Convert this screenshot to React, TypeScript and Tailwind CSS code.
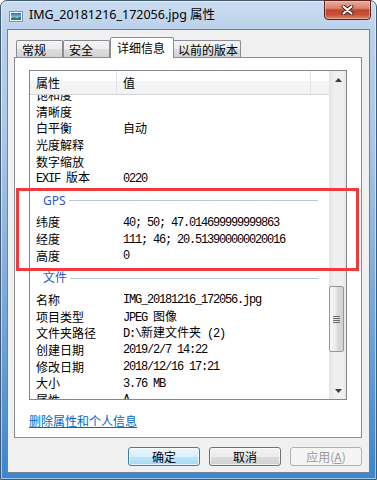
import React from 'react';

const cjk = "font-['Noto_Sans_CJK_SC',sans-serif]";
const mono = "font-['Liberation_Mono','Noto_Sans_CJK_SC',monospace] tracking-[-1.2px]";

// half-width text in the SimSun-like cell grid (6px per char)
const M = ({ children }: { children: React.ReactNode }) => <span className={mono}>{children}</span>;
const C = ({ children }: { children: React.ReactNode }) => <span className={`${cjk} tracking-normal`}>{children}</span>;

type RowProps = { label: React.ReactNode; value?: React.ReactNode };

const Row: React.FC<RowProps> = ({ label, value }) => (
  <div className="flex h-[16.7px] items-center whitespace-nowrap text-[12px] leading-none text-black">
    <div className={`w-[87px] shrink-0 pl-[6px] ${cjk}`}>{label}</div>
    <div className="pl-[6px]">{value}</div>
  </div>
);

const Group: React.FC<{ title: string }> = ({ title }) => (
  <div className="flex h-[27.3px] items-center pl-[13px] pr-[11px] pt-[1px]">
    <span className="font-['Noto_Sans','Noto_Sans_CJK_SC',sans-serif] text-[12px] leading-none text-[#2b5bcb]">{title}</span>
    <div className="ml-[3px] h-px flex-1 bg-[#b8c6e0]" />
  </div>
);

const TitleIcon = () => (
  <svg width="14" height="11" viewBox="0 0 14 11">
    <defs>
      <linearGradient id="sky" x1="0" y1="0" x2="0" y2="1">
        <stop offset="0" stopColor="#1f6fb8" />
        <stop offset="0.6" stopColor="#8cc4ea" />
        <stop offset="1" stopColor="#d8eef8" />
      </linearGradient>
    </defs>
    <rect x="0.5" y="0.5" width="13" height="10" fill="#fdfdfd" stroke="#8193a8" />
    <rect x="2" y="2" width="10" height="7" fill="url(#sky)" />
    <path d="M2 7.2 L5 6 L8 7 L12 5.6 V9 H2 Z" fill="#2f7a6c" />
  </svg>
);

const CloseX = () => (
  <svg width="13" height="10" viewBox="0 0 13 10">
    <path d="M2.5 1.5 L10.5 8.5 M10.5 1.5 L2.5 8.5" stroke="#3a1d18" strokeWidth="4" strokeLinecap="round" />
    <path d="M2.5 1.5 L10.5 8.5 M10.5 1.5 L2.5 8.5" stroke="#ffffff" strokeWidth="2.2" strokeLinecap="round" />
  </svg>
);

const Arrow = ({ up }: { up?: boolean }) => (
  <svg width="7" height="4" viewBox="0 0 7 4">
    <path d={up ? 'M0 4 L3.5 0 L7 4 Z' : 'M0 0 L3.5 4 L7 0 Z'} fill="#3c3c3c" />
  </svg>
);

const App: React.FC = () => {
  return (
    <div className="h-[480px] w-[377px] overflow-hidden bg-white">
      <div className="flex h-full flex-col rounded-t-[7px] border border-[#425a76] bg-[linear-gradient(180deg,#cadcf0_0%,#b9d0ea_7%,#a9c6e6_30%,#6ea3d8_70%,#3b86cc_100%)] shadow-[inset_0_0_0_1px_rgba(255,255,255,0.55)]">
        {/* title bar */}
        <div className="flex h-[28px] shrink-0 items-center pl-[8px]">
          <div className="mt-[3px]">
            <TitleIcon />
          </div>
          <span className="ml-[6px] mt-[1px] font-['Noto_Sans','Noto_Sans_CJK_SC',sans-serif] text-[12.5px] leading-none text-black">
            IMG_20181216_172056.jpg 属性
          </span>
          <div className="-mt-px ml-auto mr-[5px] flex h-[20px] w-[47px] items-center justify-center self-start rounded-b-[4px] border border-[#5a2218] bg-[linear-gradient(180deg,#e9aa9c_0%,#d98570_40%,#c0452f_50%,#c94f37_75%,#e08868_100%)] shadow-[inset_0_0_0_1px_rgba(255,220,210,0.45)]">
            <CloseX />
          </div>
        </div>

        {/* client area */}
        <div className="mx-[6px] flex h-[444px] shrink-0 flex-col border border-[#6f829c] bg-[#f0f0f0]">
          {/* tabs */}
          <div className={`relative z-10 -mb-px mt-[7px] flex h-[21px] items-end pl-[8px] text-[12px] leading-none text-black ${cjk}`}>
            <div className="mb-px flex h-[17px] w-[47px] items-center rounded-t-[2px] border-x border-t border-[#898c95] bg-[linear-gradient(180deg,#f4f4f4_0%,#ececec_50%,#dedede_51%,#d3d3d3_100%)] pl-[5px] pt-[2px]">常规</div>
            <div className="mb-px flex h-[17px] w-[47px] items-center rounded-t-[2px] border-x border-t border-[#898c95] bg-[linear-gradient(180deg,#f4f4f4_0%,#ececec_50%,#dedede_51%,#d3d3d3_100%)] pl-[5px] pt-[2px]">安全</div>
            <div className="flex h-[21px] w-[64px] items-center rounded-t-[2px] border-x border-t border-[#898c95] bg-white pl-[6px]">详细信息</div>
            <div className="-ml-px mb-px flex h-[17px] w-[68px] items-center rounded-t-[2px] border-x border-t border-[#898c95] bg-[linear-gradient(180deg,#f4f4f4_0%,#ececec_50%,#dedede_51%,#d3d3d3_100%)] pl-[4px] pt-[2px]">以前的版本</div>
          </div>

          {/* tab panel */}
          <div className="ml-[6px] flex h-[381px] w-[348px] flex-col border border-[#898c95] bg-white pl-[14px]">
            <div className="mt-[12px] flex h-[330px] w-[318px] border border-[#828790]">
              <div className="flex min-w-0 flex-1 flex-col">
                <div className={`flex h-[24px] shrink-0 border-b border-[#d5d5d5] bg-[linear-gradient(180deg,#ffffff_0%,#ffffff_42%,#f4f5f6_43%,#f1f2f3_100%)] text-[12px] leading-none text-black ${cjk}`}>
                  <div className="flex w-[87px] items-center border-r border-[#e2e4e6] pl-[6px]">属性</div>
                  <div className="flex w-[194px] items-center border-r border-[#e2e4e6] pl-[6px]">值</div>
                  <div className="flex-1" />
                </div>
                <div className="flex-1 overflow-hidden">
                  <div className="-mt-[8.3px]">
                    <Row label="饱和度" />
                    <Row label="清晰度" />
                    <Row label="白平衡" value={<C>自动</C>} />
                    <Row label="光度解释" />
                    <Row label="数字缩放" />
                    <Row label={<><M>EXIF </M>版本</>} value={<M>0220</M>} />
                    <Group title="GPS" />
                    <Row label="纬度" value={<M>40; 50; 47.014699999999863</M>} />
                    <Row label="经度" value={<M>111; 46; 20.513900000020016</M>} />
                    <Row label="高度" value={<M>0</M>} />
                    <Group title="文件" />
                    <Row label="名称" value={<M>IMG_20181216_172056.jpg</M>} />
                    <Row label="项目类型" value={<><M>JPEG </M><C>图像</C></>} />
                    <Row label="文件夹路径" value={<><M>D:\</M><C>新建文件夹</C><M> (2)</M></>} />
                    <Row label="创建日期" value={<M>2019/2/7 14:22</M>} />
                    <Row label="修改日期" value={<M>2018/12/16 17:21</M>} />
                    <Row label="大小" value={<M>3.76 MB</M>} />
                    <Row label="属性" value={<M>A</M>} />
                  </div>
                </div>
              </div>
              {/* scrollbar */}
              <div className="flex w-[17px] shrink-0 flex-col bg-[linear-gradient(90deg,#e4e4e4_0%,#f0f0f0_30%,#f0f0f0_80%,#e6e6e6_100%)]">
                <div className="flex h-[17px] items-center justify-center pl-px">
                  <Arrow up />
                </div>
                <div className="mt-[198px] flex h-[66px] w-[15px] flex-col items-center justify-center gap-px rounded-[2px] border border-[#989898] bg-[linear-gradient(90deg,#f6f6f6_0%,#ececec_45%,#dcdcdc_55%,#d2d2d2_100%)]">
                  <div className="h-px w-[7px] bg-[#6b6b6b]" />
                  <div className="h-px w-[7px] bg-[#6b6b6b]" />
                  <div className="h-px w-[7px] bg-[#6b6b6b]" />
                  <div className="h-px w-[7px] bg-[#6b6b6b]" />
                </div>
                <div className="mt-auto flex h-[17px] items-center justify-center pl-px">
                  <Arrow />
                </div>
              </div>
            </div>
            <div className="mt-[8px]">
              <span className={`text-[12px] leading-[16px] text-[#0066cc] underline ${cjk}`}>删除属性和个人信息</span>
            </div>
          </div>

          {/* buttons */}
          <div className={`mt-[9px] flex justify-end gap-[9px] pr-[7px] text-[12px] leading-none ${cjk}`}>
            <div className="flex h-[19px] w-[72px] items-center justify-center rounded-[3px] border border-[#3c7fb1] bg-[linear-gradient(180deg,#eaf6fd_0%,#d9f0fc_50%,#bee6fd_51%,#a7d9f5_100%)] text-black shadow-[inset_0_0_0_1px_rgba(255,255,255,0.7)]">确定</div>
            <div className="flex h-[19px] w-[72px] items-center justify-center rounded-[3px] border border-[#707070] bg-[linear-gradient(180deg,#f2f2f2_0%,#ebebeb_50%,#dddddd_51%,#cfcfcf_100%)] text-black shadow-[inset_0_0_0_1px_rgba(255,255,255,0.7)]">取消</div>
            <div className="flex h-[19px] w-[72px] items-center justify-center rounded-[3px] border border-[#adb2b5] bg-[#f4f4f4] text-[#9a9a9a]">
              应用(<span className="underline">A</span>)
            </div>
          </div>
        </div>
      </div>

      {/* annotation box */}
      <div className="pointer-events-none absolute left-[16px] top-[188px] h-[83px] w-[343px] border-[3px] border-[#f03a3b]" />
    </div>
  );
};

export default App;
